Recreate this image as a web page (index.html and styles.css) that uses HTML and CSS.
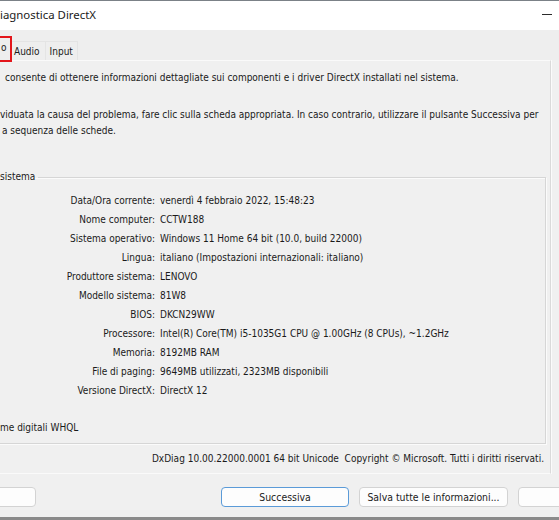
FILE: index.html
```html
<!DOCTYPE html>
<html lang="it">
<head>
<meta charset="utf-8">
<title>Strumento di diagnostica DirectX</title>
<link rel="stylesheet" href="styles.css">
</head>
<body>
<div class="window">
  <div class="titlebar">
    <span class="title">iagnostica DirectX</span>
    <span class="minimize" aria-label="Riduci a icona"></span>
  </div>
  <div class="tabs">
    <span class="tab tab-marked">o</span>
    <span class="tab tab-audio">Audio</span>
    <span class="tab">Input</span>
  </div>
  <div class="page">
    <p class="intro first">consente di ottenere informazioni dettagliate sui componenti e i driver DirectX installati nel sistema.</p>
    <p class="intro second">viduata la causa del problema, fare clic sulla scheda appropriata. In caso contrario, utilizzare il pulsante Successiva per<br><span class="indent">a sequenza delle schede.</span></p>
    <fieldset class="group">
      <legend>sistema</legend>
      <div class="info">
        <span class="label">Data/Ora corrente:</span><span class="value">venerdì 4 febbraio 2022, 15:48:23</span>
        <span class="label">Nome computer:</span><span class="value">CCTW188</span>
        <span class="label">Sistema operativo:</span><span class="value">Windows 11 Home 64 bit (10.0, build 22000)</span>
        <span class="label">Lingua:</span><span class="value">italiano (Impostazioni internazionali: italiano)</span>
        <span class="label">Produttore sistema:</span><span class="value">LENOVO</span>
        <span class="label">Modello sistema:</span><span class="value">81W8</span>
        <span class="label">BIOS:</span><span class="value">DKCN29WW</span>
        <span class="label">Processore:</span><span class="value">Intel(R) Core(TM) i5-1035G1 CPU @ 1.00GHz (8 CPUs), ~1.2GHz</span>
        <span class="label">Memoria:</span><span class="value">8192MB RAM</span>
        <span class="label">File di paging:</span><span class="value">9649MB utilizzati, 2323MB disponibili</span>
        <span class="label">Versione DirectX:</span><span class="value">DirectX 12</span>
      </div>
      <div class="whql">me digitali WHQL</div>
    </fieldset>
    <div class="footer-note">DxDiag 10.00.22000.0001 64 bit Unicode&nbsp; Copyright © Microsoft. Tutti i diritti riservati.</div>
  </div>
  <div class="buttons">
    <button class="btn btn-left"></button>
    <button class="btn btn-default">Successiva</button>
    <button class="btn btn-save">Salva tutte le informazioni...</button>
    <button class="btn btn-next"></button>
  </div>
</div>
</body>
</html>
```
FILE: styles.css
```css
html, body {
  margin: 0;
  padding: 0;
  background: #f0f0f0;
}

.window {
  width: 559px;
  height: 520px;
  overflow: hidden;
  background: #f0f0f0;
  font-family: "DejaVu Sans Condensed", "DejaVu Sans", sans-serif;
  font-stretch: condensed;
  font-size: 10px;
  color: #1a1a1a;
  display: flex;
  flex-direction: column;
}

.titlebar {
  height: 29px;
  flex: none;
  border-top: 1px solid #7b8187;
  background: #ffffff;
  display: flex;
  align-items: center;
  justify-content: space-between;
}

.title {
  font-family: "Noto Sans", sans-serif;
  font-stretch: normal;
  font-size: 11.4px;
  color: #1a1a1a;
  margin-top: -2px;
}

.minimize {
  width: 10px;
  height: 1px;
  background: #2b2b2b;
  margin-right: 7px;
  margin-top: -2px;
}

.tabs {
  height: 30px;
  flex: none;
  display: flex;
  align-items: flex-end;
  background: #eeeeee;
  position: relative;
  z-index: 1;
}

.tab {
  height: 19px;
  line-height: 19px;
  padding: 0 4px;
  box-sizing: border-box;
  border-top: 1px solid #e4e4e4;
  border-right: 1px solid #e4e4e4;
}

.tab-marked {
  width: 12px;
  height: 26px;
  line-height: 20px;
  padding: 0 0 0 1px;
  border: 2px solid #e3161b;
  border-left: none;
  margin-bottom: -2px;
  box-sizing: border-box;
}

.tab-audio {
  padding: 0 5px 0 2px;
}

.page {
  height: 414px;
  flex: none;
  box-sizing: border-box;
  width: 551px;
  border-top: 1px solid #fafafa;
  border-right: 1px solid #dadada;
  border-bottom: 1px solid #fafafa;
  box-shadow: 1px 0 0 #fbfbfb;
  padding: 9px 0 0 0;
  display: flex;
  flex-direction: column;
}

.intro {
  margin: 0;
  line-height: 16px;
  white-space: nowrap;
}

.intro.first {
  padding-left: 5px;
}

.intro.second {
  margin-top: 21px;
}

.indent {
  padding-left: 2px;
}

.group {
  margin: 30px 4px 0 -20px;
  padding: 0 0 7px 0;
  border: 1px solid #d6d6d6;
  box-shadow: inset 1px 1px 0 #fbfbfb, 1px 1px 0 #fbfbfb;
  min-width: 0;
}

.group legend {
  margin-left: 19px;
  padding: 0 3px 0 0;
  line-height: 16px;
}

.info {
  display: grid;
  grid-template-columns: 174px auto;
  grid-auto-rows: 19.1px;
  column-gap: 5px;
  align-items: center;
  padding-top: 5.5px;
  white-space: nowrap;
}

.label {
  text-align: right;
}

.whql {
  margin-top: 19.5px;
  padding-left: 19px;
  line-height: 16px;
}

.footer-note {
  margin-top: 7px;
  padding-right: 6px;
  text-align: right;
  line-height: 16px;
  white-space: nowrap;
}

.buttons {
  flex: none;
  height: 43px;
  box-sizing: border-box;
  padding-top: 13px;
  display: flex;
  align-items: flex-start;
  gap: 10px;
}

.btn {
  flex: none;
  height: 20px;
  padding: 0;
  box-sizing: border-box;
  background: #fdfdfd;
  border: 1px solid #d3d3d3;
  border-radius: 4px;
  font-family: inherit;
  font-stretch: condensed;
  font-size: 10.4px;
  color: #1a1a1a;
  line-height: 18px;
}

.btn-left {
  width: 80px;
  margin-left: -44px;
  margin-right: 175px;
}

.btn-default {
  width: 128px;
  border-color: #5b9bd8;
}

.btn-save {
  width: 149px;
}

.btn-next {
  width: 128px;
}

.window::after {
  content: "";
  display: block;
  flex: none;
  height: 3px;
  background: #8a8a8a;
}
```
